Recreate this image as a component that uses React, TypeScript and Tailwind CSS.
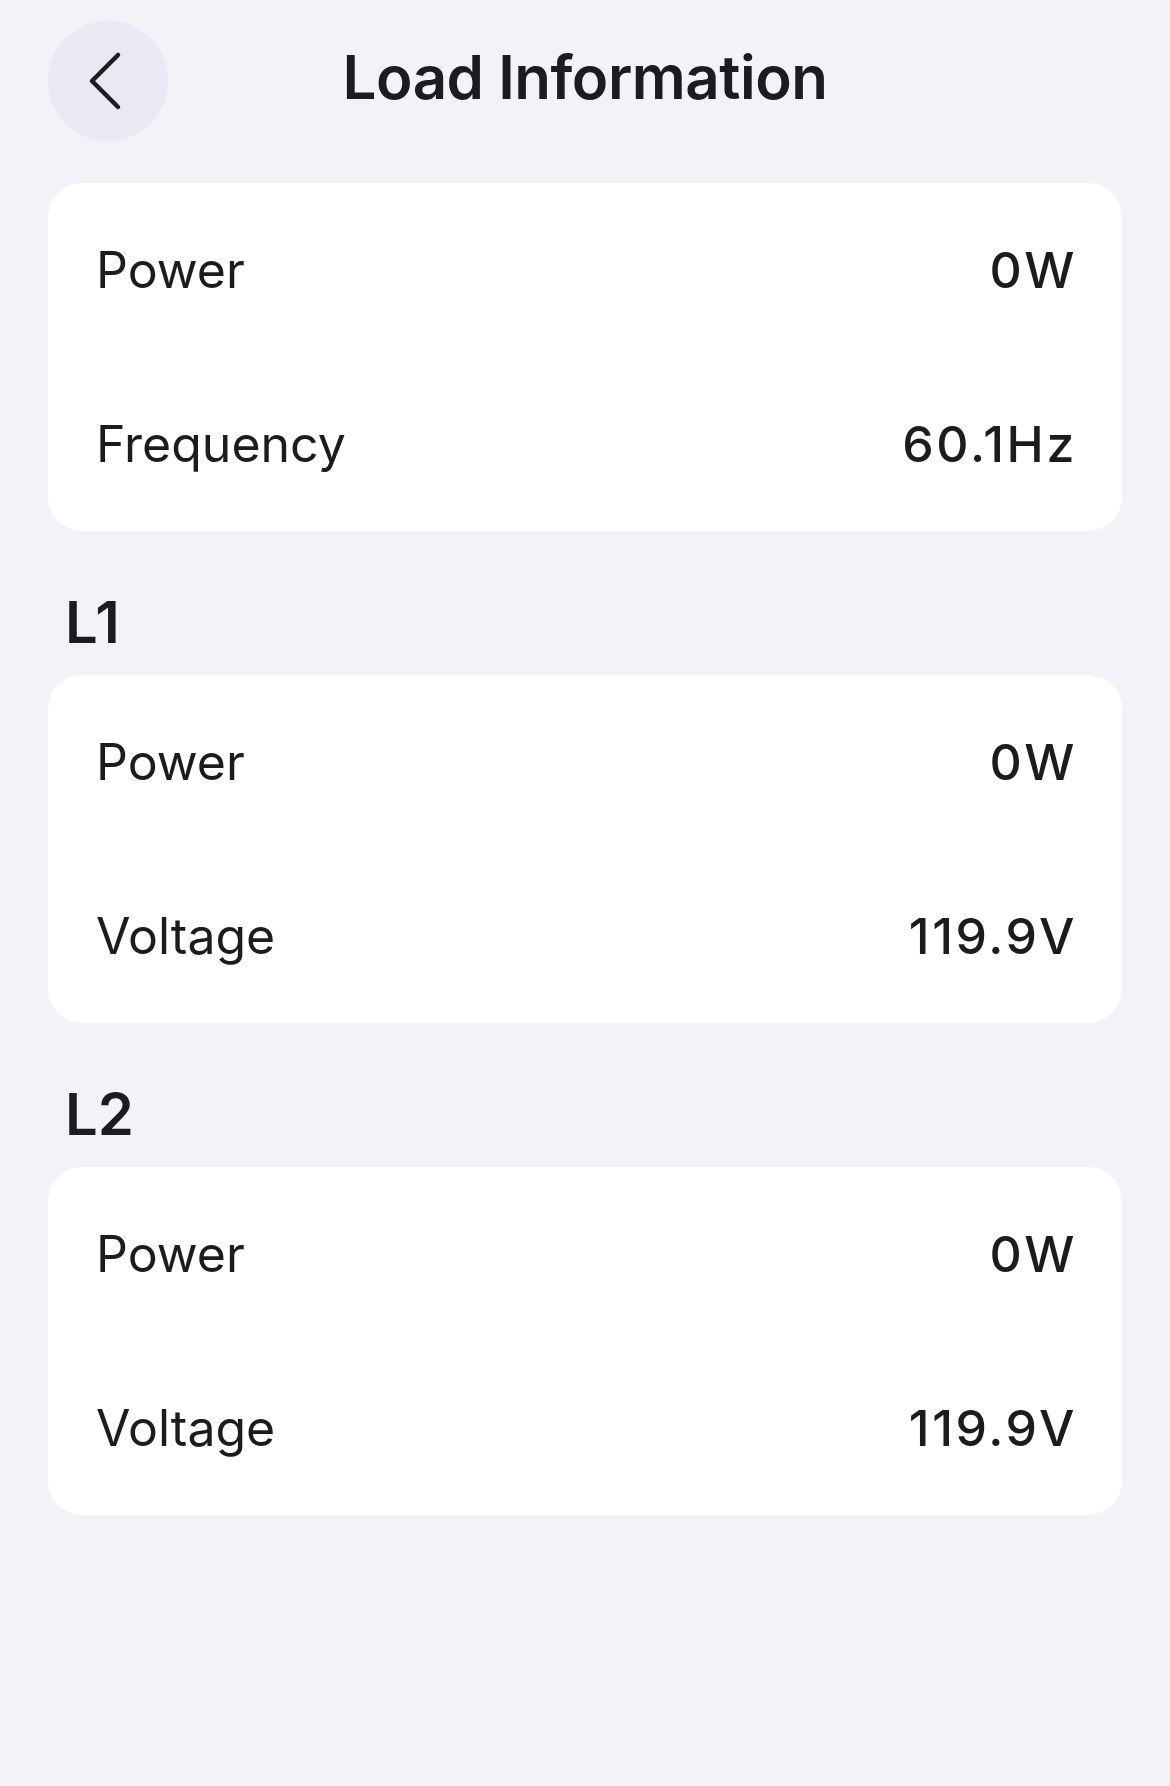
import React from 'react';

interface Row {
  label: string;
  value: string;
}

const sections: { title?: string; rows: Row[] }[] = [
  {
    rows: [
      { label: 'Power', value: '0W' },
      { label: 'Frequency', value: '60.1Hz' },
    ],
  },
  {
    title: 'L1',
    rows: [
      { label: 'Power', value: '0W' },
      { label: 'Voltage', value: '119.9V' },
    ],
  },
  {
    title: 'L2',
    rows: [
      { label: 'Power', value: '0W' },
      { label: 'Voltage', value: '119.9V' },
    ],
  },
];

const BackIcon = () => (
  <svg width="40" height="60" viewBox="0 0 40 60" fill="none">
    <polyline
      points="32,4 6,30 32,56"
      stroke="#1c1c1e"
      strokeWidth="4.5"
      strokeLinecap="round"
      strokeLinejoin="round"
    />
  </svg>
);

const InfoCard: React.FC<{ rows: Row[] }> = ({ rows }) => (
  <div className="bg-white rounded-[34px] px-[48px]">
    {rows.map((row, i) => (
      <div key={i} className="h-[174px] flex items-center justify-between">
        <span className="text-[50px] leading-none text-[#1c1c1e]">{row.label}</span>
        <span className="text-[50px] leading-none font-medium tracking-[2.6px] -mr-[3px] text-[#1c1c1e]">
          {row.value}
        </span>
      </div>
    ))}
  </div>
);

export default function App() {
  return (
    <div className="min-h-screen bg-[#f2f2f7] px-[48px] pt-[21px] font-['Inter',sans-serif]">
      {/* header */}
      <div className="grid grid-cols-[120px_1fr_120px] items-center h-[120px]">
        <button className="w-[120px] h-[120px] rounded-full bg-[#e9e9f4] flex items-center justify-center pr-[4px]">
          <BackIcon />
        </button>
        <h1 className="text-center text-[60px] leading-none font-semibold text-[#1c1c1e] tracking-[-0.5px] mb-[8px]">
          Load Information
        </h1>
        <div />
      </div>

      <div className="mt-[42px]">
        {sections.map((section, i) => (
          <div key={i}>
            {section.title && (
              <div className="h-[144px] flex items-center pt-[38px] pl-[17px]">
                <span className="text-[58px] leading-none font-semibold text-[#1c1c1e]">{section.title}</span>
              </div>
            )}
            <InfoCard rows={section.rows} />
          </div>
        ))}
      </div>
    </div>
  );
}
